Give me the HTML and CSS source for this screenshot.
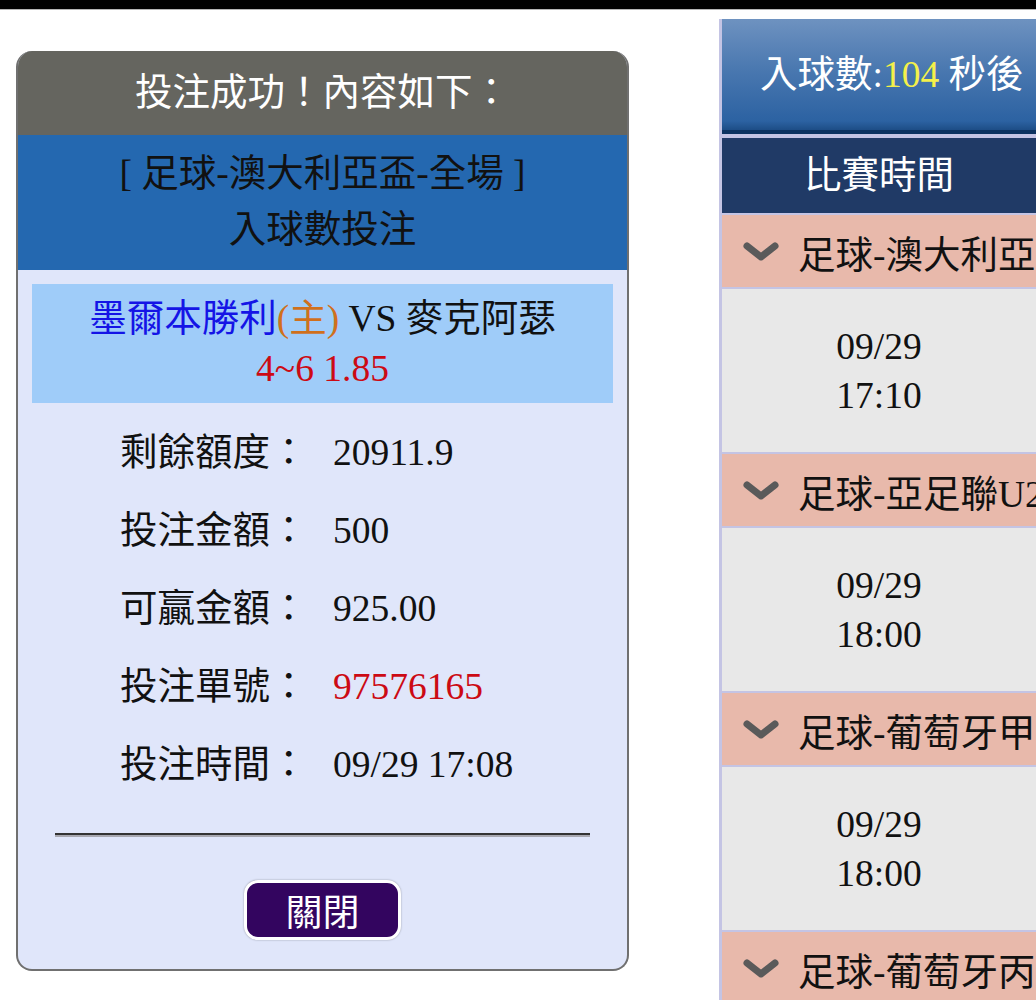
FILE: index.html
```html
<!DOCTYPE html>
<html lang="zh-Hant">
<head>
  <meta charset="UTF-8" />
  <meta name="viewport" content="width=device-width, initial-scale=1.0"/>
  <title>投注成功</title>
  <link rel="stylesheet" href="styles.css">
</head>
<body>
  <div class="topbar"></div>

  <div class="page">
    <div class="dialog">
      <div class="dialog-title">投注成功！內容如下：</div>
      <div class="bet-type">[ 足球-澳大利亞盃-全場 ]<br>入球數投注</div>

      <div class="dialog-body">
        <div class="match">
          <div><span class="home">墨爾本勝利</span><span class="tag">(主)</span> VS 麥克阿瑟</div>
          <div class="odds">4~6 1.85</div>
        </div>

        <div class="info">
          <div class="label">剩餘額度：</div><div>20911.9</div>
          <div class="label">投注金額：</div><div>500</div>
          <div class="label">可贏金額：</div><div>925.00</div>
          <div class="label">投注單號：</div><div class="ticket">97576165</div>
          <div class="label">投注時間：</div><div>09/29 17:08</div>
        </div>

        <hr class="rule">

        <button class="close">關閉</button>
      </div>
    </div>

    <div class="board">
      <div class="board-head">入球數:<span class="count">104</span> 秒後</div>
      <div class="col-head"><div class="cell">比賽時間</div></div>

      <div class="league">
        <svg class="chevron" viewBox="0 0 38 21"><polyline points="5,5 19,16 33,5"/></svg>
        <span>足球-澳大利亞盃</span>
      </div>
      <div class="game"><div class="cell">09/29<br>17:10</div></div>

      <div class="league">
        <svg class="chevron" viewBox="0 0 38 21"><polyline points="5,5 19,16 33,5"/></svg>
        <span>足球-亞足聯U23</span>
      </div>
      <div class="game"><div class="cell">09/29<br>18:00</div></div>

      <div class="league">
        <svg class="chevron" viewBox="0 0 38 21"><polyline points="5,5 19,16 33,5"/></svg>
        <span>足球-葡萄牙甲組</span>
      </div>
      <div class="game"><div class="cell">09/29<br>18:00</div></div>

      <div class="league">
        <svg class="chevron" viewBox="0 0 38 21"><polyline points="5,5 19,16 33,5"/></svg>
        <span>足球-葡萄牙丙組</span>
      </div>
    </div>
  </div>
</body>
</html>
```

FILE: styles.css
```css
body {
  margin: 0;
  background: #fff;
  font-family: "Liberation Serif", "Noto Sans CJK TC", serif;
  font-size: 37.5px;
  color: #111;
  overflow: hidden;
}
.topbar {
  height: 9px;
  background: #000;
  border-bottom: 1px solid #b4b4b4;
}
.page {
  display: flex;
  align-items: flex-start;
}

/* dialog */
.dialog {
  width: 613px;
  box-sizing: border-box;
  margin: 41px 0 0 16px;
  background: #e0e6fa;
  border: 2px solid #707070;
  border-top: 0;
  border-radius: 16px;
  overflow: hidden;
}
.dialog-title {
  height: 84px;
  line-height: 84px;
  margin: 0 -2px;
  background: #65655f;
  color: #fff;
  text-align: center;
}
.bet-type {
  background: #2468b0;
  padding: 11px 0 12px;
  line-height: 56px;
  text-align: center;
}
.dialog-body {
  padding: 14px 14px 29px;
}
.match {
  background: #9fccf9;
  padding: 10px 0 9px;
  line-height: 50px;
  text-align: center;
}
.home {
  color: #1414e6;
}
.tag {
  color: #d0701c;
}
.odds {
  color: #cc0a14;
}
.info {
  display: grid;
  grid-template-columns: 190px auto;
  column-gap: 23px;
  margin-top: 11px;
  padding-left: 88px;
  line-height: 78px;
}
.ticket {
  color: #cc0a14;
}
.rule {
  margin: 29px 23px 0;
  border: 0;
  border-top: 2px solid #333;
  border-bottom: 2px solid #a8a8b0;
}
.close {
  display: block;
  margin: 43px auto 0;
  width: 157px;
  height: 60px;
  padding: 0;
  background: #33055f;
  color: #fff;
  border: 3px solid #fff;
  border-radius: 14px;
  box-shadow: 0 0 2px rgba(0, 0, 0, 0.35);
  font-family: "Noto Sans CJK TC", sans-serif;
  font-size: 37px;
  line-height: 52px;
}

/* board on the right */
.board {
  flex: 1;
  min-width: 0;
  margin: 9px 0 0 90px;
  border-left: 3px solid #c4c4e4;
  overflow: hidden;
  white-space: nowrap;
}
.board-head {
  height: 111px;
  line-height: 111px;
  padding-left: 38px;
  color: #fff;
  background: linear-gradient(#6e92c0, #4a78b0 45%, #2c62a2 92%, #1d4d86);
  border-bottom: 4px solid #0c3260;
}
.count {
  color: #f4f04a;
}
.cell {
  width: 314px;
  text-align: center;
}
.col-head {
  height: 75px;
  line-height: 75px;
  background: #203a66;
  color: #fff;
  border-top: 4px solid #c4c4e4;
}
.league {
  display: flex;
  align-items: center;
  gap: 18px;
  height: 72px;
  padding-left: 20px;
  background: #e8b9ab;
  border-top: 2px solid #c4c4e4;
  overflow: hidden;
}
.chevron {
  flex-shrink: 0;
  width: 38px;
  height: 21px;
  fill: none;
  stroke: #5a5a5a;
  stroke-width: 7;
  stroke-linecap: round;
  stroke-linejoin: round;
  filter: blur(0.6px);
}
.game {
  display: flex;
  align-items: center;
  height: 163px;
  background: #e8e8e8;
  border-top: 2px solid #c4c4e4;
  line-height: 49px;
}
```
